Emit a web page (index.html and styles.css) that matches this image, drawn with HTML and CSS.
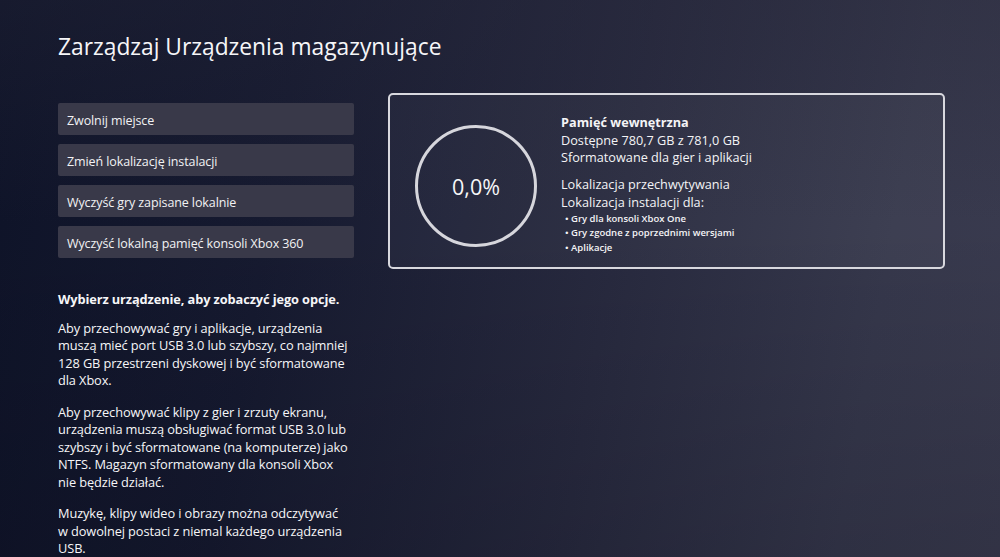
FILE: index.html
```html
<!DOCTYPE html>
<html lang="pl">
<head>
<meta charset="utf-8">
<link rel="stylesheet" href="styles.css">
</head>
<body>
<div class="screen">
  <h1 class="title">Zarządzaj Urządzenia magazynujące</h1>
  <div class="content">
    <div class="left">
      <div class="menu">
        <div class="btn">Zwolnij miejsce</div>
        <div class="btn">Zmień lokalizację instalacji</div>
        <div class="btn">Wyczyść gry zapisane lokalnie</div>
        <div class="btn">Wyczyść lokalną pamięć konsoli Xbox 360</div>
      </div>
      <div class="info">
        <p class="lead">Wybierz urządzenie, aby zobaczyć jego opcje.</p>
        <p>Aby przechowywać gry i aplikacje, urządzenia muszą mieć port USB 3.0 lub szybszy, co najmniej 128 GB przestrzeni dyskowej i być sformatowane dla Xbox.</p>
        <p>Aby przechowywać klipy z gier i zrzuty ekranu, urządzenia muszą obsługiwać format USB 3.0 lub szybszy i być sformatowane (na komputerze) jako NTFS. Magazyn sformatowany dla konsoli Xbox nie będzie działać.</p>
        <p>Muzykę, klipy wideo i obrazy można odczytywać w dowolnej postaci z niemal każdego urządzenia USB.</p>
      </div>
    </div>
    <div class="panel">
      <div class="ring"><span>0,0%</span></div>
      <div class="details">
        <div class="name">Pamięć wewnętrzna</div>
        <div class="line">Dostępne 780,7 GB z 781,0 GB</div>
        <div class="line">Sformatowane dla gier i aplikacji</div>
        <div class="line gap">Lokalizacja przechwytywania</div>
        <div class="line">Lokalizacja instalacji dla:</div>
        <ul class="bullets">
          <li>Gry dla konsoli Xbox One</li>
          <li>Gry zgodne z poprzednimi wersjami</li>
          <li>Aplikacje</li>
        </ul>
      </div>
    </div>
  </div>
</div>
</body>
</html>
```
FILE: styles.css
```css
html, body {
  margin: 0;
  padding: 0;
}
body {
  width: 1000px;
  height: 557px;
  overflow: hidden;
  background:
    linear-gradient(180deg, rgba(40, 40, 58, 0.35) 0%, rgba(0, 0, 0, 0) 40%, rgba(0, 0, 10, 0.15) 100%),
    linear-gradient(100deg, #0e1328 0%, #161a30 28%, #282a3f 60%, #36384c 85%, #3a3b4f 100%);
  font-family: "Open Sans", "Liberation Sans", sans-serif;
  color: #f2f2f4;
}
.screen {
  padding: 31px 0 0 58px;
}
.title {
  margin: 0;
  font-size: 22.8px;
  font-weight: 400;
  line-height: 32px;
  color: #f6f6f8;
}
.content {
  display: flex;
  gap: 34px;
  margin-top: 30px;
  align-items: flex-start;
}
.left {
  width: 296px;
  padding-top: 10px;
}
.menu {
  display: flex;
  flex-direction: column;
  gap: 9px;
}
.btn {
  height: 32px;
  line-height: 32px;
  padding: 2px 0 0 9px;
  box-sizing: border-box;
  background: #393949;
  border-radius: 2px;
  font-size: 12.5px;
  letter-spacing: -0.1px;
  color: #f2f2f4;
}
.info {
  margin-top: 33px;
  font-size: 12.8px;
  line-height: 17.5px;
  letter-spacing: -0.1px;
  color: #f6f6f8;
  width: 291px;
}
.info p {
  margin: 0 0 14px 0;
}
.info .lead {
  font-weight: 700;
  margin-bottom: 11px;
}
.panel {
  width: 553px;
  height: 172px;
  border: 2px solid #d8d8de;
  border-radius: 5px;
  background: rgba(255, 255, 255, 0.035);
  display: flex;
  align-items: flex-start;
}
.ring {
  width: 116px;
  height: 116px;
  border: 3px solid #d6d6dc;
  border-radius: 50%;
  margin: 30px 0 0 25px;
  display: flex;
  align-items: center;
  justify-content: center;
  flex-shrink: 0;
}
.ring span {
  font-size: 21.5px;
  color: #f6f6f8;
}
.details {
  margin: 19px 0 0 24px;
  font-size: 12.7px;
  line-height: 17.7px;
  color: #f4f4f6;
}
.name {
  font-weight: 700;
}
.gap {
  margin-top: 9px;
}
.bullets {
  list-style: none;
  margin: 0;
  padding: 0 0 0 4px;
  font-size: 9.5px;
  font-weight: 600;
  line-height: 14.5px;
}
.bullets li::before {
  content: "• ";
}
```
